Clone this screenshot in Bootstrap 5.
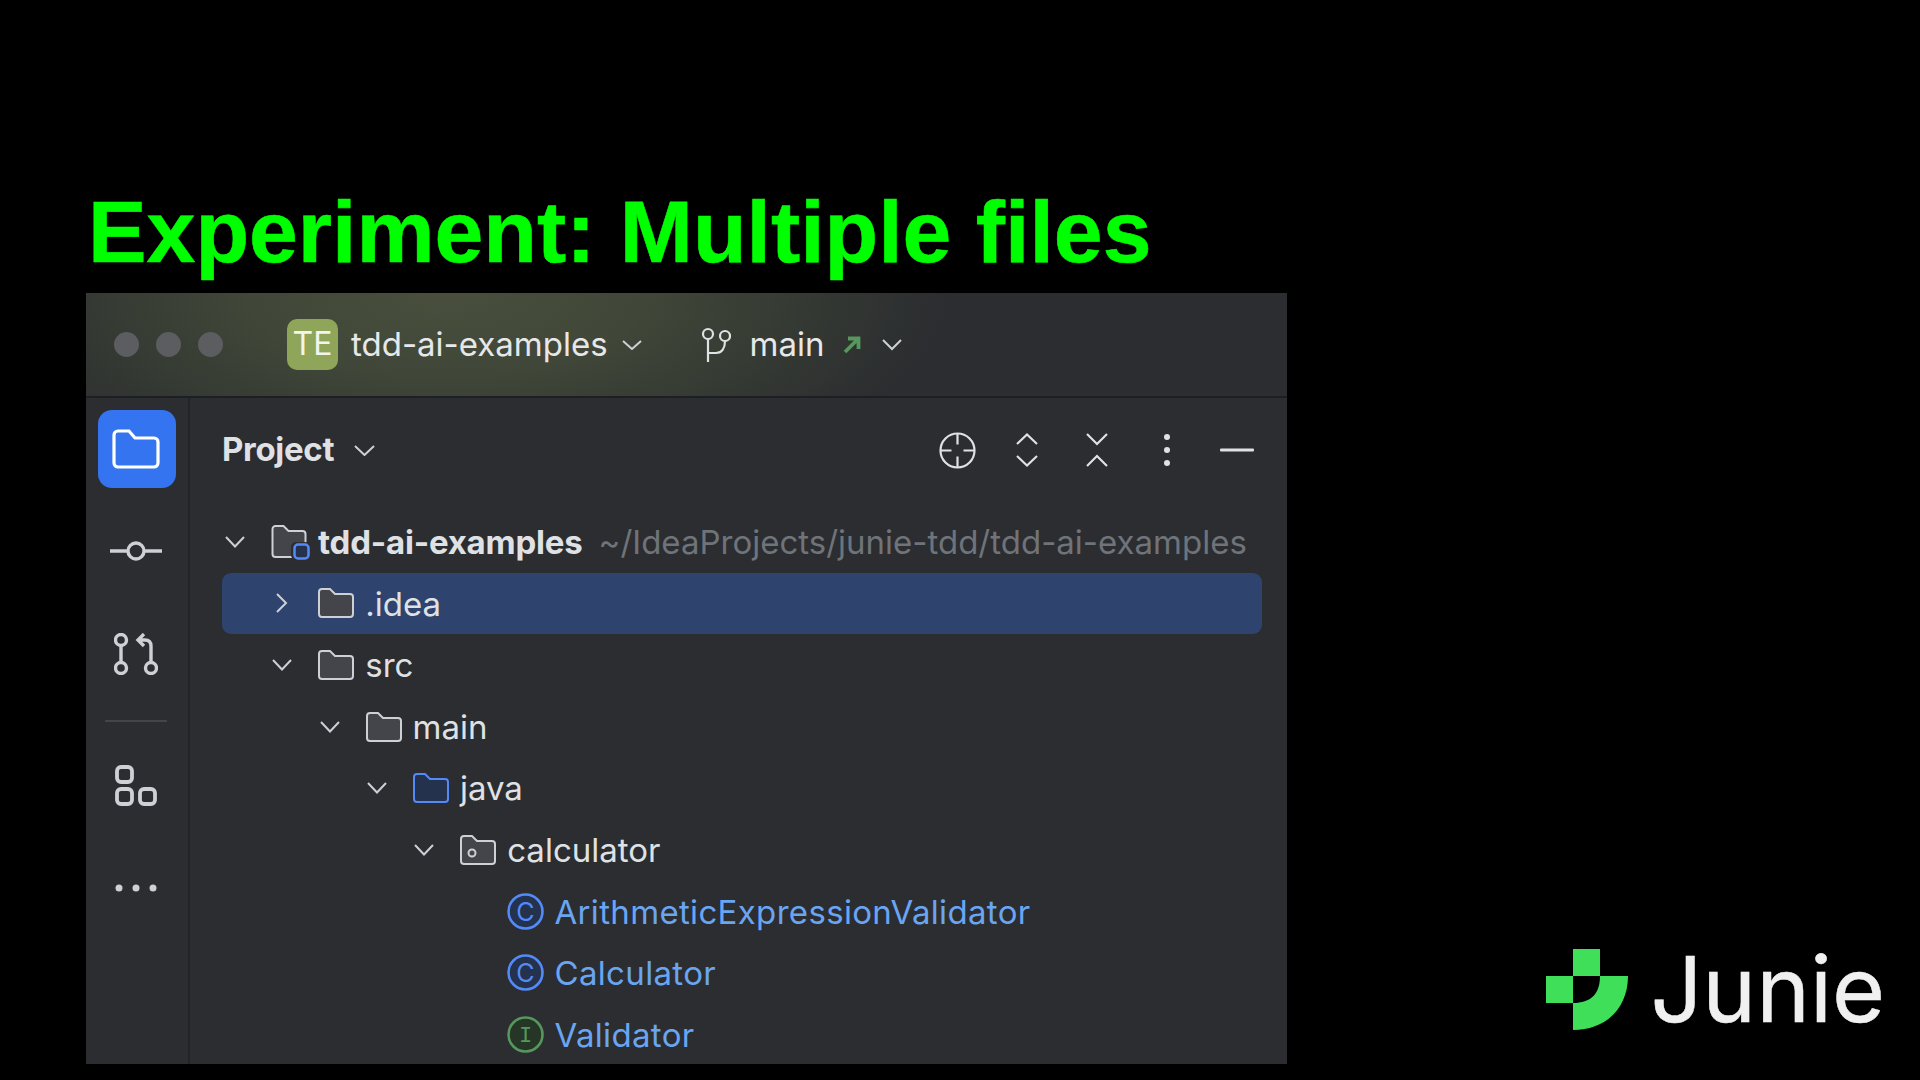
<!DOCTYPE html>
<html lang="en">
<head>
<meta charset="utf-8">
<title>Experiment: Multiple files</title>
<link href="https://cdn.jsdelivr.net/npm/bootstrap@5.3.0/dist/css/bootstrap.min.css" rel="stylesheet">
<style>
html,body{background:#000;margin:0;overflow:hidden}
.slide-frame{width:1920px;height:1080px;background:#000;font-family:Inter,"Noto Sans",sans-serif}
.left-pane{width:1287px;padding-left:86px}
.slide-title{height:293px;margin:0;font:700 87.8px/1 "Liberation Sans",Arial,sans-serif;color:#0f0;padding-bottom:16px;padding-left:2px;white-space:nowrap;-webkit-text-stroke:.6px #0f0}
.ide-win{width:1201px;height:771px;background:#2b2d30;color:#dfe1e5;overflow:hidden;font-size:33px;line-height:1.2}
.title-strip{height:105px;flex:none;padding-left:28px;border-bottom:2px solid #1e1f22;background:radial-gradient(ellipse 500px 210px at 360px 0,#494f3c 0,#424839 35%,#373c34 65%,#2b2d30 100%)}
.win-dot{width:25px;height:25px;border-radius:50%;background:#5b5d60;margin-right:17px}
.proj-badge{width:51px;height:51px;border-radius:10px;background:#8fa55a;color:#f3f5ec;font-size:32px;margin-left:47px;margin-right:13px}
.strip-text{color:#e6e8ea}
.ml-a{margin-left:14px}
.ml-b{margin-left:59px}
.ml-c{margin-left:19px}
.ml-d{margin-left:20px}
.ml-e{margin-left:21px}
.ml-f{margin-left:18px}
.side-rail{width:104px;flex:none;padding-top:12px;border-right:2px solid #232427}
.rail-active{width:78px;height:78px;border-radius:14px;background:#3574f0}
.rail-glyph{margin-right:2px}
.mt-r1{margin-top:53px}.mt-r2{margin-top:72px}.mt-r3{margin-top:45px}.mt-r4{margin-top:43px}.mt-r5{margin-top:78px}
.rail-sep{width:62px;height:2px;background:#43454a}
.panel-head{height:104px;padding-left:32px;padding-right:15px}
.head-title{font-weight:700;font-size:33px;color:#dfe1e5;letter-spacing:-.3px}
.tool-cell{width:70px}
.tree-wrap{margin-top:9px;padding-left:32px;padding-right:25px}
.tree-line{height:61.6px;white-space:nowrap;flex:none}
.tree-line.is-sel{background:#2e436e;border-radius:9px}
.lvl-1{padding-left:47.3px}.lvl-2{padding-left:94.6px}.lvl-3{padding-left:141.9px}.lvl-4{padding-left:189.2px}.lvl-5{padding-left:236.5px}
.chev-cell{width:49px;flex:none;padding-left:3px}
.chev-cell.chev-side{padding-left:6px}
.icon-cell{width:47px;flex:none}
.icon-cell.wide-glyph{margin-left:-1px;width:48px}
.tree-line>span{position:relative;top:1px}
.name-bold{font-weight:700;letter-spacing:-.2px}
.name-muted{color:#6f737a;margin-left:16px}
.name-class{color:#6aa5f2;letter-spacing:.33px}
svg{display:block}
.junie-side{padding:0 35px 45px 0}
.junie-word{font-size:91px;line-height:1;color:#f0f0f0;font-weight:400;margin-left:22px;-webkit-text-stroke:.5px #f0f0f0}
</style>
</head>
<body>
<div class="slide-frame d-flex">
  <div class="left-pane d-flex flex-column">
    <h1 class="slide-title d-flex align-items-end">Experiment: Multiple files</h1>
    <div class="ide-win d-flex flex-column">
      <div class="title-strip d-flex align-items-center">
        <span class="win-dot"></span><span class="win-dot"></span><span class="win-dot"></span>
        <span class="proj-badge d-flex align-items-center justify-content-center">TE</span>
        <span class="strip-text">tdd-ai-examples</span>
        <svg class="ml-a" width="20" height="10" viewBox="0 0 20 10" fill="none" stroke="#ced0d6" stroke-width="2"><path d="M1 1l9 8 9-8"/></svg>
        <svg class="ml-b" width="30" height="36" viewBox="0 0 30 36" fill="none" stroke="#dfe1e5" stroke-width="2.2"><circle cx="7" cy="7" r="5"/><circle cx="24" cy="9" r="5"/><path d="M7 12v23M7 26h8c6 0 9-5 9-12"/></svg>
        <span class="strip-text ml-c">main</span>
        <svg class="ml-f" width="18" height="18" viewBox="0 0 18 18" fill="none" stroke="#57965c" stroke-width="3.8"><path d="M2 16L15 3M5 2.5h10.500v10.500"/></svg>
        <svg class="ml-e" width="20" height="12" viewBox="0 0 20 12" fill="none" stroke="#ced0d6" stroke-width="2"><path d="M1 1l9 9 9-9"/></svg>
      </div>
      <div class="d-flex flex-grow-1">
        <div class="side-rail d-flex flex-column align-items-center">
          <div class="rail-active d-flex align-items-center justify-content-center">
            <svg class="rail-glyph" width="48" height="40" viewBox="0 0 48 40" fill="none" stroke="#fff" stroke-width="3.2"><path d="M2 6a4 4 0 0 1 4-4h11l6 7h19a4 4 0 0 1 4 4v21a4 4 0 0 1-4 4H6a4 4 0 0 1-4-4z"/></svg>
          </div>
          <svg class="mt-r1 rail-glyph" width="52" height="20" viewBox="0 0 52 20" fill="none" stroke="#ced0d6" stroke-width="3.400"><circle cx="26" cy="10" r="8"/><path d="M0 10h18M34 10h18"/></svg>
          <svg class="mt-r2 rail-glyph" width="44" height="42" viewBox="0 0 44 42" fill="none" stroke="#ced0d6" stroke-width="3.400"><circle cx="7" cy="7" r="5.500"/><circle cx="7" cy="35" r="5.500"/><circle cx="37" cy="35" r="5.500"/><path d="M7 12.500v17M37 29.500V13c0-4-2-6-6-6h-6M30 1l-6 6 6 6"/></svg>
          <div class="rail-sep mt-r3 rail-glyph"></div>
          <svg class="mt-r4 rail-glyph" width="42" height="41" viewBox="0 0 42 41" fill="none" stroke="#ced0d6" stroke-width="3.800"><rect x="2" y="2" width="15" height="15" rx="4"/><rect x="2" y="24" width="15" height="15" rx="4"/><rect x="25" y="24" width="15" height="15" rx="4"/></svg>
          <svg class="mt-r5 rail-glyph" width="42" height="8" viewBox="0 0 42 8" fill="#ced0d6"><circle cx="4" cy="4" r="3.500"/><circle cx="21" cy="4" r="3.500"/><circle cx="38" cy="4" r="3.500"/></svg>
        </div>
        <div class="flex-grow-1 overflow-hidden">
          <div class="panel-head d-flex align-items-center">
            <span class="head-title">Project</span>
            <svg class="ml-d" width="21" height="11" viewBox="0 0 21 11" fill="none" stroke="#ced0d6" stroke-width="2"><path d="M1 1l9.500 9 9.500-9"/></svg>
            <div class="d-flex align-items-center ms-auto">
              <div class="tool-cell d-flex justify-content-center"><svg width="37" height="37" viewBox="0 0 37 37" fill="none" stroke="#dfe1e5" stroke-width="2.200"><circle cx="18.500" cy="18.500" r="17"/><path d="M18.500 1.500v11M18.500 24.500v11M1.500 18.500h11M24.500 18.500h11"/></svg></div>
              <div class="tool-cell d-flex justify-content-center"><svg width="22" height="34" viewBox="0 0 22 34" fill="none" stroke="#dfe1e5" stroke-width="2.200"><path d="M1 11L11 1.500 21 11M1 23l10 9.500L21 23"/></svg></div>
              <div class="tool-cell d-flex justify-content-center"><svg width="22" height="34" viewBox="0 0 22 34" fill="none" stroke="#dfe1e5" stroke-width="2.200"><path d="M1 1l10 10L21 1M1 33l10-10 10 10"/></svg></div>
              <div class="tool-cell d-flex justify-content-center"><svg width="8" height="34" viewBox="0 0 8 34" fill="#dfe1e5"><circle cx="4" cy="4" r="3"/><circle cx="4" cy="17" r="3"/><circle cx="4" cy="30" r="3"/></svg></div>
              <div class="tool-cell d-flex justify-content-center"><svg width="34" height="4" viewBox="0 0 34 4" fill="#dfe1e5"><rect y="0.500" width="34" height="3" rx="1"/></svg></div>
            </div>
          </div>
          <div class="tree-wrap d-flex flex-column">
            <div class="tree-line d-flex align-items-center">
              <div class="chev-cell"><svg width="20" height="12" viewBox="0 0 20 12" fill="none" stroke="#ced0d6" stroke-width="2"><path d="M1 1l9 9.500L19 1"/></svg></div>
              <div class="icon-cell"><svg width="40" height="36" viewBox="0 0 40 36" fill="none"><path d="M1.500 5a3 3 0 0 1 3-3h8l5 5h14a3 3 0 0 1 3 3v20a3 3 0 0 1-3 3h-27a3 3 0 0 1-3-3z" fill="#43454a" stroke="#ced0d6" stroke-width="2"/><rect x="20" y="18" width="19" height="18" rx="5" fill="#2b2d30"/><rect x="23.500" y="20.500" width="14" height="14" rx="3.500" fill="#25324d" stroke="#548af7" stroke-width="2.500"/></svg></div>
              <span class="name-bold">tdd-ai-examples</span><span class="name-muted">~/IdeaProjects/junie-tdd/tdd-ai-examples</span>
            </div>
            <div class="tree-line is-sel lvl-1 d-flex align-items-center">
              <div class="chev-cell chev-side"><svg width="13" height="20" viewBox="0 0 13 20" fill="none" stroke="#ced0d6" stroke-width="2"><path d="M2 1l9 9-9 9"/></svg></div>
              <div class="icon-cell"><svg width="36" height="30" viewBox="0 0 36 30"><path d="M1 4a3 3 0 0 1 3-3h8l5 5h15a3 3 0 0 1 3 3v17a3 3 0 0 1-3 3H4a3 3 0 0 1-3-3z" fill="#43454a" stroke="#ced0d6" stroke-width="2"/></svg></div>
              <span>.idea</span>
            </div>
            <div class="tree-line lvl-1 d-flex align-items-center">
              <div class="chev-cell"><svg width="20" height="12" viewBox="0 0 20 12" fill="none" stroke="#ced0d6" stroke-width="2"><path d="M1 1l9 9.500L19 1"/></svg></div>
              <div class="icon-cell"><svg width="36" height="30" viewBox="0 0 36 30"><path d="M1 4a3 3 0 0 1 3-3h8l5 5h15a3 3 0 0 1 3 3v17a3 3 0 0 1-3 3H4a3 3 0 0 1-3-3z" fill="#43454a" stroke="#ced0d6" stroke-width="2"/></svg></div>
              <span>src</span>
            </div>
            <div class="tree-line lvl-2 d-flex align-items-center">
              <div class="chev-cell"><svg width="20" height="12" viewBox="0 0 20 12" fill="none" stroke="#ced0d6" stroke-width="2"><path d="M1 1l9 9.500L19 1"/></svg></div>
              <div class="icon-cell"><svg width="36" height="30" viewBox="0 0 36 30"><path d="M1 4a3 3 0 0 1 3-3h8l5 5h15a3 3 0 0 1 3 3v17a3 3 0 0 1-3 3H4a3 3 0 0 1-3-3z" fill="#43454a" stroke="#ced0d6" stroke-width="2"/></svg></div>
              <span>main</span>
            </div>
            <div class="tree-line lvl-3 d-flex align-items-center">
              <div class="chev-cell"><svg width="20" height="12" viewBox="0 0 20 12" fill="none" stroke="#ced0d6" stroke-width="2"><path d="M1 1l9 9.500L19 1"/></svg></div>
              <div class="icon-cell"><svg width="36" height="30" viewBox="0 0 36 30"><path d="M1 4a3 3 0 0 1 3-3h8l5 5h15a3 3 0 0 1 3 3v17a3 3 0 0 1-3 3H4a3 3 0 0 1-3-3z" fill="#25324d" stroke="#548af7" stroke-width="2"/></svg></div>
              <span>java</span>
            </div>
            <div class="tree-line lvl-4 d-flex align-items-center">
              <div class="chev-cell"><svg width="20" height="12" viewBox="0 0 20 12" fill="none" stroke="#ced0d6" stroke-width="2"><path d="M1 1l9 9.500L19 1"/></svg></div>
              <div class="icon-cell"><svg width="36" height="30" viewBox="0 0 36 30"><path d="M1 4a3 3 0 0 1 3-3h8l5 5h15a3 3 0 0 1 3 3v17a3 3 0 0 1-3 3H4a3 3 0 0 1-3-3z" fill="#43454a" stroke="#ced0d6" stroke-width="2"/><circle cx="12" cy="18" r="3.500" fill="none" stroke="#ced0d6" stroke-width="2"/></svg></div>
              <span>calculator</span>
            </div>
            <div class="tree-line lvl-5 d-flex align-items-center">
              <div class="chev-cell"></div>
              <div class="icon-cell wide-glyph"><svg width="37" height="37" viewBox="0 0 37 37"><circle cx="18.500" cy="18.500" r="17" fill="#25324d" stroke="#548af7" stroke-width="2.600"/><text x="18.500" y="27.500" text-anchor="middle" font-family="Inter,sans-serif" font-size="25" fill="#548af7">C</text></svg></div>
              <span class="name-class">ArithmeticExpressionValidator</span>
            </div>
            <div class="tree-line lvl-5 d-flex align-items-center">
              <div class="chev-cell"></div>
              <div class="icon-cell wide-glyph"><svg width="37" height="37" viewBox="0 0 37 37"><circle cx="18.500" cy="18.500" r="17" fill="#25324d" stroke="#548af7" stroke-width="2.600"/><text x="18.500" y="27.500" text-anchor="middle" font-family="Inter,sans-serif" font-size="25" fill="#548af7">C</text></svg></div>
              <span class="name-class">Calculator</span>
            </div>
            <div class="tree-line lvl-5 d-flex align-items-center">
              <div class="chev-cell"></div>
              <div class="icon-cell wide-glyph"><svg width="37" height="37" viewBox="0 0 37 37"><circle cx="18.500" cy="18.500" r="17" fill="#253627" stroke="#57965c" stroke-width="2.600"/><text x="18.500" y="26" text-anchor="middle" font-family="Liberation Mono,monospace" font-size="22" fill="#57965c">I</text></svg></div>
              <span class="name-class">Validator</span>
            </div>
          </div>
        </div>
      </div>
    </div>
  </div>
  <div class="junie-side flex-grow-1 d-flex align-items-end justify-content-end">
    <div class="d-flex align-items-center">
      <svg width="82" height="81" viewBox="0 0 82 81" fill="#3fdf5a"><rect x="27" width="27" height="27"/><rect y="27" width="27" height="27"/><path d="M54 27h28c0 32-22 54-55 54V54c18 0 27-9 27-27z"/></svg>
      <span class="junie-word">Junie</span>
    </div>
  </div>
</div>
<script src="https://cdn.jsdelivr.net/npm/bootstrap@5.3.0/dist/js/bootstrap.bundle.min.js"></script>
</body>
</html>
